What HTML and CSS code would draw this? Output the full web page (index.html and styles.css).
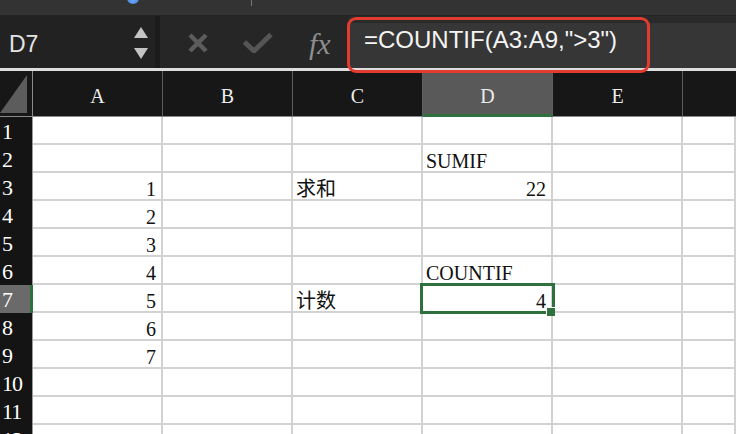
FILE: index.html
```html
<!DOCTYPE html>
<html>
<head>
<meta charset="utf-8">
<link rel="stylesheet" href="styles.css">
</head>
<body>
<div class="topstrip"><span class="dot"></span><span class="tick"></span></div>
<div class="fbar">
  <div class="namebox">
    <span class="name">D7</span>
    <span class="spin">
      <svg width="14" height="11" viewBox="0 0 14 11"><polygon points="7,0 14,11 0,11" fill="#c4c4c4"/></svg>
      <svg width="14" height="11" viewBox="0 0 14 11"><polygon points="0,0 14,0 7,11" fill="#c4c4c4"/></svg>
    </span>
  </div>
  <div class="sep"></div>
  <div class="tools">
    <svg class="ico-x" width="20" height="20" viewBox="0 0 20 20"><path d="M2 2 L18 18 M18 2 L2 18" stroke="#5c5c5c" stroke-width="4.5" fill="none"/></svg>
    <svg class="ico-ok" width="30" height="20" viewBox="0 0 30 20"><path d="M1.5 9 L11 18 L28 1.5" stroke="#555555" stroke-width="5" fill="none"/></svg>
    <span class="fx">fx</span>
  </div>
  <div class="input"><span class="formula">=COUNTIF(A3:A9,"&gt;3")</span></div>
</div>
<div class="rule"></div>
<div class="sheet">
  <div class="corner"><span class="tri"></span></div>
  <div class="ch">A</div><div class="ch">B</div><div class="ch">C</div><div class="ch sel">D</div><div class="ch">E</div><div class="ch last"></div>

  <div class="rh">1</div><div class="c"></div><div class="c"></div><div class="c"></div><div class="c"></div><div class="c"></div><div class="c"></div>
  <div class="rh">2</div><div class="c"></div><div class="c"></div><div class="c"></div><div class="c">SUMIF</div><div class="c"></div><div class="c"></div>
  <div class="rh">3</div><div class="c num">1</div><div class="c"></div><div class="c">求和</div><div class="c num">22</div><div class="c"></div><div class="c"></div>
  <div class="rh">4</div><div class="c num">2</div><div class="c"></div><div class="c"></div><div class="c"></div><div class="c"></div><div class="c"></div>
  <div class="rh">5</div><div class="c num">3</div><div class="c"></div><div class="c"></div><div class="c"></div><div class="c"></div><div class="c"></div>
  <div class="rh">6</div><div class="c num">4</div><div class="c"></div><div class="c"></div><div class="c">COUNTIF</div><div class="c"></div><div class="c"></div>
  <div class="rh sel">7</div><div class="c num">5</div><div class="c"></div><div class="c">计数</div><div class="c num active">4<span class="selbox"></span><span class="handle"></span></div><div class="c"></div><div class="c"></div>
  <div class="rh">8</div><div class="c num">6</div><div class="c"></div><div class="c"></div><div class="c"></div><div class="c"></div><div class="c"></div>
  <div class="rh">9</div><div class="c num">7</div><div class="c"></div><div class="c"></div><div class="c"></div><div class="c"></div><div class="c"></div>
  <div class="rh">10</div><div class="c"></div><div class="c"></div><div class="c"></div><div class="c"></div><div class="c"></div><div class="c"></div>
  <div class="rh">11</div><div class="c"></div><div class="c"></div><div class="c"></div><div class="c"></div><div class="c"></div><div class="c"></div>
  <div class="rh">12</div><div class="c"></div><div class="c"></div><div class="c"></div><div class="c"></div><div class="c"></div><div class="c"></div>
</div>
<div class="callout"></div>
</body>
</html>
```
FILE: styles.css
```css
* { box-sizing: border-box; }
html, body {
  margin: 0;
  padding: 0;
  width: 736px;
  height: 434px;
  overflow: hidden;
  background: #ffffff;
  position: relative;
}
.topstrip {
  height: 16px;
  background: #333333;
  border-bottom: 1px solid #262626;
  display: flex;
  align-items: flex-start;
}
.dot {
  width: 12px;
  height: 12px;
  border-radius: 50%;
  margin-left: 127px;
  margin-top: -8px;
  background: radial-gradient(circle at 50% 70%, #6aa7f5, #2f6fd8);
}
.tick {
  width: 1px;
  height: 6px;
  margin-left: 112px;
  background: #7a7a7a;
}
.fbar {
  height: 52px;
  display: flex;
  background: #2a2a2a;
}
.namebox {
  width: 155px;
  background: #222222;
  display: flex;
  align-items: center;
  padding-left: 9px;
  padding-top: 4px;
}
.name {
  font-family: "Liberation Sans", Arial, sans-serif;
  font-size: 23px;
  color: #e4e4e4;
  line-height: 22px;
  flex: 1;
}
.spin {
  display: flex;
  flex-direction: column;
  gap: 10px;
  margin-right: 7px;
  margin-top: -3px;
}
.spin svg { display: block; }
.sep {
  width: 5px;
  background: #1b1b1b;
}
.tools {
  width: 188px;
  background: #262626;
  display: flex;
  align-items: center;
  padding-left: 28px;
  padding-top: 2px;
}
.ico-x { display: block; }
.ico-ok { display: block; margin-left: 35px; }
.fx {
  margin-left: 36px;
  font-family: "Liberation Serif", "Times New Roman", serif;
  font-style: italic;
  font-size: 30px;
  color: #8e8e8e;
  line-height: 30px;
  margin-top: 2px;
}
.input {
  flex: 1;
  margin-top: 7px;
  background: #363636;
  padding-left: 16px;
  padding-top: 5px;
}
.formula {
  font-family: "Liberation Sans", Arial, sans-serif;
  font-size: 24px;
  line-height: 24px;
  color: #f4f4f4;
}
.rule {
  height: 3px;
  background: #dedede;
}
.sheet {
  display: grid;
  grid-template-columns: 33px repeat(5, 130px) 1fr;
  grid-template-rows: 46px repeat(12, 28px);
  height: 363px;
  overflow: hidden;
  font-family: "Liberation Serif", "Noto Sans CJK SC", serif;
}
.corner {
  background: #171717;
  border-right: 1px solid #8a8a8a;
  border-bottom: 1px solid #8a8a8a;
  display: flex;
  align-items: flex-end;
  padding: 0 5px 3px 0;
}
.tri {
  display: block;
  width: 28px;
  height: 38px;
  background: #5c5c5c;
  clip-path: polygon(100% 0, 100% 100%, 0 100%);
}
.ch {
  background: #171717;
  color: #ececec;
  border-right: 1px solid #5e5e5e;
  border-bottom: 1px solid #8a8a8a;
  display: flex;
  align-items: center;
  justify-content: center;
  font-size: 20px;
  padding-top: 5px;
}
.ch.sel {
  background: #595959;
  border-bottom: 3px solid #30703f;
  padding-top: 7px;
}
.ch.last { border-right: none; }
.rh {
  background: #141414;
  color: #ffffff;
  border-right: 1px solid #9a9a9a;
  font-size: 22px;
  line-height: 22px;
  display: flex;
  align-items: flex-end;
  padding-left: 2px;
  padding-bottom: 2px;
  letter-spacing: -1px;
}
.rh.sel {
  background: #6a6a6a;
  border-right: 3px solid #30703f;
}
.c {
  border-right: 2px solid #d2d2d2;
  border-bottom: 2px solid #d2d2d2;
  font-size: 20px;
  line-height: 20px;
  color: #111111;
  display: flex;
  align-items: flex-end;
  padding: 0 5px 0 3px;
  white-space: nowrap;
}
.c.num { justify-content: flex-end; }
.c.active { position: relative; }
.selbox {
  position: absolute;
  left: -3px;
  top: -2px;
  right: -4px;
  bottom: -3px;
  border: 3px solid #30703f;
}
.handle {
  position: absolute;
  right: -4px;
  bottom: -5px;
  width: 9px;
  height: 9px;
  background: #30703f;
  border-top: 1px solid #ffffff;
  border-left: 1px solid #ffffff;
}
.callout {
  position: absolute;
  left: 347px;
  top: 17px;
  width: 303px;
  height: 56px;
  border: 3px solid #e23b2f;
  border-radius: 9px;
}
```
